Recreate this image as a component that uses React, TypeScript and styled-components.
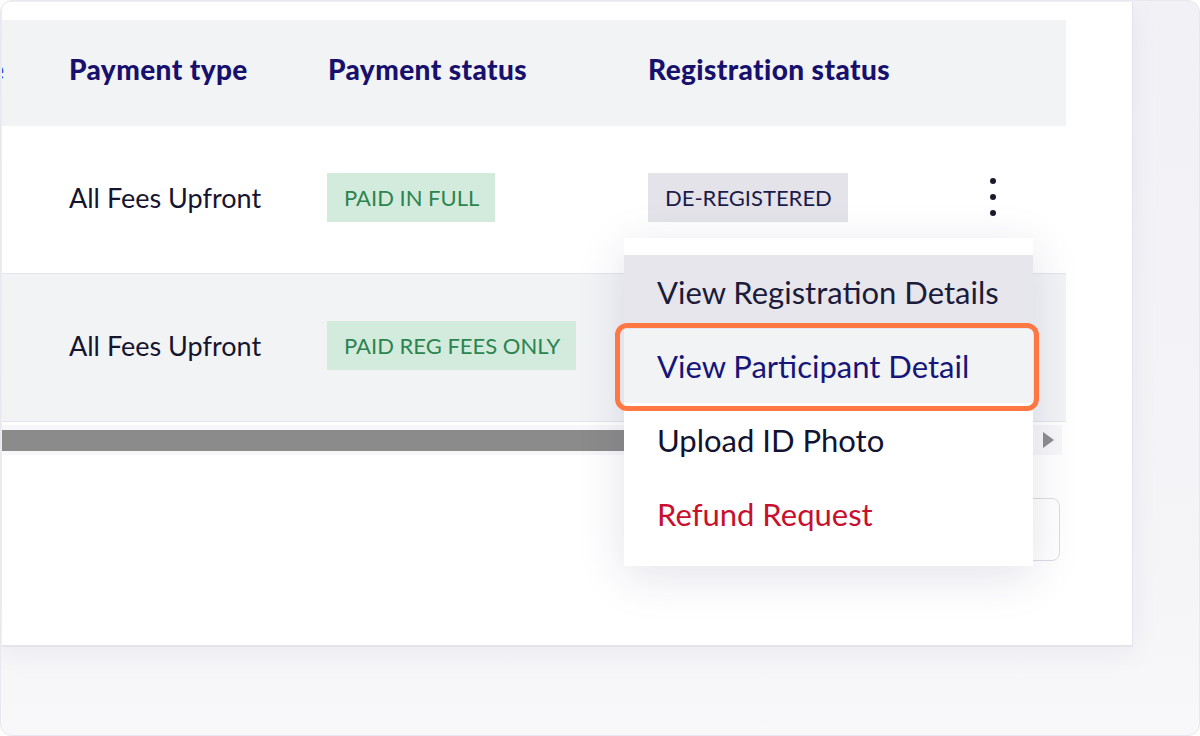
import styled, { createGlobalStyle } from 'styled-components'

const GlobalStyle = createGlobalStyle`
  html, body {
    margin: 0;
    padding: 0;
    background: #ffffff;
    font-family: Lato, "Open Sans", Arial, sans-serif;
  }
`

const Frame = styled.div`
  box-sizing: border-box;
  width: 1200px;
  height: 736px;
  border: 1px solid #e8e8ee;
  border-radius: 12px;
  background: linear-gradient(180deg, #f1f1f6 0%, #f5f5f8 80%, #f8f8fa 100%);
  overflow: hidden;
  padding: 1px 0 0 1px;
`

const Card = styled.div`
  position: relative;
  box-sizing: border-box;
  width: 1131px;
  height: 645px;
  background: #ffffff;
  border-top-left-radius: 8px;
  border-right: 1px solid #e4e4ea;
  border-bottom: 2px solid #e4e4ea;
  box-shadow: 0 6px 28px rgba(40, 40, 90, 0.06);
  padding-top: 18px;
  overflow: hidden;
`

const Table = styled.div`
  width: 1064px;
  overflow: hidden;
`

const Row = styled.div<{ $shade?: boolean; $height: number }>`
  box-sizing: border-box;
  display: flex;
  align-items: center;
  height: ${(p) => p.$height}px;
  padding-bottom: 5px;
  background: ${(p) => (p.$shade ? '#f2f3f5' : '#ffffff')};
  border-bottom: ${(p) => (p.$shade === undefined ? 'none' : '1px solid #e4e4ea')};
`

const HeadRow = styled(Row)`
  background: #f2f3f5;
  padding-bottom: 9px;
`

const Cut = styled.div`
  width: 67px;
  flex-shrink: 0;
  display: flex;
  justify-content: flex-end;
  overflow: hidden;
`

const CutText = styled.span`
  margin-right: 65px;
  font-size: 28px;
  font-weight: 900;
  color: #3a4fc8;
`

const Cell = styled.div<{ $w: number }>`
  width: ${(p) => p.$w}px;
  flex-shrink: 0;
  display: flex;
  align-items: center;
`

const HeadText = styled.span`
  font-size: 28px;
  font-weight: 900;
  letter-spacing: 0.4px;
  color: #17106c;
`

const BodyText = styled.span`
  font-size: 27px;
  color: #15152f;
`

const Badge = styled.span<{ $tone: 'green' | 'gray' }>`
  display: inline-flex;
  align-items: center;
  height: 49px;
  padding: 0 16px 0 17px;
  font-size: 22px;
  text-transform: uppercase;
  background: ${(p) => (p.$tone === 'green' ? '#d3ebdd' : '#e3e3e9')};
  color: ${(p) => (p.$tone === 'green' ? '#2c8450' : '#1c1c4a')};
`

const Kebab = styled.div`
  display: flex;
  flex-direction: column;
  gap: 10px;
  margin-left: 20px;
  span {
    width: 6px;
    height: 6px;
    border-radius: 50%;
    background: #1b1b30;
  }
`

const ScrollBar = styled.div`
  display: flex;
  align-items: center;
  width: 1060px;
  height: 30px;
  margin-top: 3px;
  background: #f7f7f9;
`

const Thumb = styled.div`
  width: 700px;
  height: 21px;
  background: #8b8b8b;
`

const Arrow = styled.div`
  margin-left: auto;
  margin-right: 8px;
  width: 0;
  height: 0;
  border-top: 8px solid transparent;
  border-bottom: 8px solid transparent;
  border-left: 11px solid #8e8e8e;
`

const Footer = styled.div`
  display: flex;
  justify-content: flex-end;
  width: 1058px;
  margin-top: 43px;
`

const PageBox = styled.div`
  width: 160px;
  height: 63px;
  box-sizing: border-box;
  border: 1px solid #dcdce3;
  border-radius: 8px;
`

const Menu = styled.div`
  position: absolute;
  left: 622px;
  top: 236px;
  width: 409px;
  padding: 17px 0 15px;
  background: #ffffff;
  box-shadow: 0 10px 44px rgba(40, 40, 100, 0.13);
`

const Item = styled.div<{ $bg?: string; $color: string }>`
  position: relative;
  height: 74px;
  display: flex;
  align-items: center;
  padding-left: 33px;
  font-size: 31px;
  background: ${(p) => p.$bg ?? 'transparent'};
  color: ${(p) => p.$color};
`

const Highlight = styled.div`
  position: absolute;
  left: -9px;
  right: -6px;
  top: -6px;
  bottom: -8px;
  border: 5px solid #ff7843;
  border-radius: 12px;
  pointer-events: none;
`

export default function App() {
  return (
    <>
      <GlobalStyle />
      <Frame>
        <Card>
          <Table>
            <HeadRow $height={106}>
              <Cut>
                <CutText>e</CutText>
              </Cut>
              <Cell $w={259}>
                <HeadText>Payment type</HeadText>
              </Cell>
              <Cell $w={320}>
                <HeadText>Payment status</HeadText>
              </Cell>
              <Cell $w={320}>
                <HeadText>Registration status</HeadText>
              </Cell>
            </HeadRow>
            <Row $height={148} $shade={false}>
              <Cut />
              <Cell $w={258}>
                <BodyText>All Fees Upfront</BodyText>
              </Cell>
              <Cell $w={321}>
                <Badge $tone="green">Paid in full</Badge>
              </Cell>
              <Cell $w={322}>
                <Badge $tone="gray">De-registered</Badge>
              </Cell>
              <Kebab>
                <span />
                <span />
                <span />
              </Kebab>
            </Row>
            <Row $height={148} $shade>
              <Cut />
              <Cell $w={258}>
                <BodyText>All Fees Upfront</BodyText>
              </Cell>
              <Cell $w={321}>
                <Badge $tone="green">Paid reg fees only</Badge>
              </Cell>
            </Row>
          </Table>
          <ScrollBar>
            <Thumb />
            <Arrow />
          </ScrollBar>
          <Footer>
            <PageBox />
          </Footer>
          <Menu>
            <Item $bg="#e6e6ec" $color="#1c1c3a">View Registration Details</Item>
            <Item $bg="#f2f3f5" $color="#16167a">
              View Participant Detail
              <Highlight />
            </Item>
            <Item $color="#121232">Upload ID Photo</Item>
            <Item $color="#c8102e">Refund Request</Item>
          </Menu>
        </Card>
      </Frame>
    </>
  )
}
